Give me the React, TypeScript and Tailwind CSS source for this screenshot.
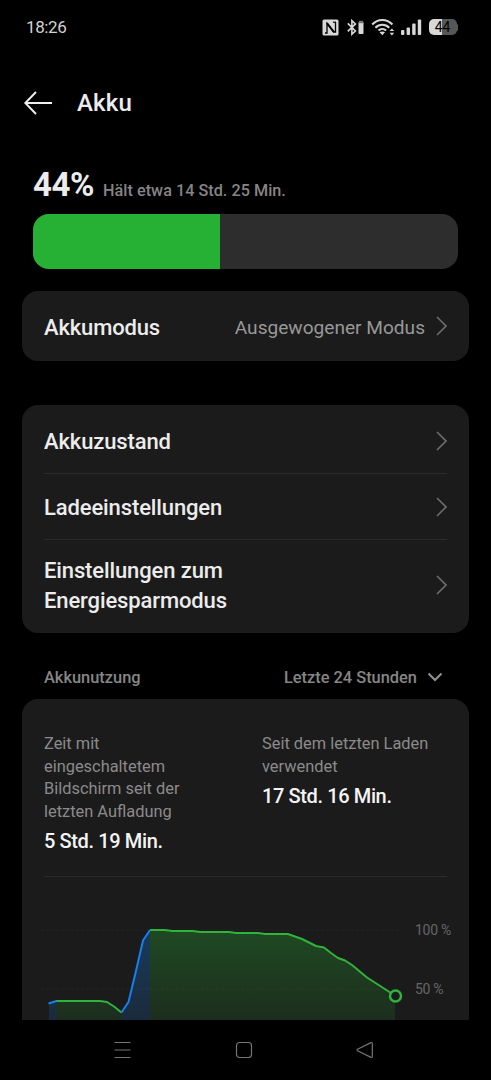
import React from "react";

const settings = [
    { title: "Akkuzustand", height: "h-[66px]" },
    { title: "Ladeeinstellungen", height: "h-[66px]" },
    { title: "Einstellungen zum Energiesparmodus", height: "h-[90px]" }
];

function Chevron() {
    return (
        <svg width="11" height="20" viewBox="0 0 11 20" fill="none" stroke="#6d6d6d" strokeWidth="1.6" className="shrink-0">
            <path d="M1 1 L10 10 L1 19" />
        </svg>
    );
}

function StatusBar() {
    return (
        <div className="flex h-[54px] items-center justify-between pl-[26px] pr-[32px]">
            <span className="text-[17px] leading-none tracking-[-0.4px] text-[#d2d2d2]">18:26</span>
            <div className="flex items-center text-[#d8d8d8]">
                {/* nfc */}
                <svg width="17" height="17" viewBox="0 0 17 17" className="mr-[8px]">
                    <rect x="0.5" y="0.5" width="16" height="16" rx="1.5" fill="#d8d8d8" />
                    <path d="M3 14 H5 V4.5 L11.5 13 H13.5 V3.2" fill="none" stroke="#000" strokeWidth="1.3" />
                    <path d="M5 4 L12 13" fill="none" stroke="#000" strokeWidth="1.8" />
                    <path d="M11 3.2 H14" fill="none" stroke="#000" strokeWidth="1.2" />
                </svg>
                {/* bluetooth with device battery */}
                <svg width="17" height="17" viewBox="0 0 17 17" className="mr-[7px]" fill="none" stroke="currentColor">
                    <path d="M0.8 4.4 L8.4 12 L4.9 15.2 V1.6 L8.4 4.9 L0.8 12.4" strokeWidth="1.6" />
                    <rect x="11.5" y="3" width="5" height="12" rx="0.8" fill="#d8d8d8" stroke="none" />
                    <rect x="12" y="1.8" width="4" height="2.4" fill="#777" stroke="none" />
                </svg>
                {/* wifi */}
                <svg width="24" height="18" viewBox="0 0 24 18" className="mr-[6px]" fill="none" stroke="currentColor" strokeWidth="2.1">
                    <path d="M1.2 6.5 C6.8 0.4 15.8 0.4 21.4 6.5" />
                    <path d="M4.4 9.7 C8.2 5.7 14.4 5.7 18.2 9.7" />
                    <path d="M7.5 12.6 C9.7 10.4 12.9 10.4 15.1 12.6" />
                    <path d="M8.6 14.2 Q11.3 12.6 14 14.2 L11.3 17.2 Z" fill="currentColor" stroke="none" />
                    <path d="M18.6 13 L20.9 10.4 L23.2 13 Z M18.6 14.8 L20.9 17.4 L23.2 14.8 Z" fill="currentColor" stroke="none" />
                </svg>
                {/* mobile signal */}
                <svg width="21" height="18" viewBox="0 0 21 18" className="mr-[7px]" fill="currentColor">
                    <rect x="0" y="12" width="3.4" height="5" rx="1" />
                    <rect x="5.6" y="9.5" width="3.4" height="7.5" rx="1" />
                    <rect x="11.2" y="5.5" width="3.4" height="11.5" rx="1" />
                    <rect x="16.8" y="1.5" width="3.4" height="15.5" rx="1" />
                </svg>
                <div className="mr-px flex items-center">
                    <div className="flex h-[16px] w-[28px] items-center justify-center rounded-[5px] bg-linear-to-r from-[#d8d8d8] from-46% to-[#575757] to-46% text-[14px] leading-none tracking-[-0.2px] text-black">
                        44
                    </div>
                    <div className="h-[7px] w-[1.5px] rounded-r bg-[#575757]" />
                </div>
            </div>
        </div>
    );
}

function BatteryChart() {
    return (
        <svg width="447" height="143" viewBox="22 877 447 143" className="block">
            <defs>
                <linearGradient id="green" gradientUnits="userSpaceOnUse" x1="0" y1="930" x2="0" y2="1040">
                    <stop offset="0" stopColor="#27b133" stopOpacity="0.31" />
                    <stop offset="1" stopColor="#27b133" stopOpacity="0.08" />
                </linearGradient>
                <linearGradient id="blue" gradientUnits="userSpaceOnUse" x1="0" y1="930" x2="0" y2="1040">
                    <stop offset="0" stopColor="#177fee" stopOpacity="0.31" />
                    <stop offset="1" stopColor="#177fee" stopOpacity="0.12" />
                </linearGradient>
            </defs>
            <path d="M41 930 H401 M41 989 H401" stroke="#242424" strokeWidth="1" strokeDasharray="3 2" />
            <path d="M49 1003.5 L56.5 1001 V1020 H49 Z M121.5 1012.5 L128.5 1002 L143 940.5 L150 930 V1020 H121.5 Z" fill="url(#blue)" />
            <path d="M56.5 1001 H100 L107 1002 L114 1006.5 L121.5 1012.5 V1020 H56.5 Z" fill="url(#green)" />
            <path d="M150 930 H165 L172 931 H193 L200 932 H229 L236 933 H258 L265 934 H288 L302 939 L316 946 L324 947.5 L331 953 L338 958 L345 960.5 L352 965 L367 977.5 L381 986.5 L395 996 V1020 H150 Z" fill="url(#green)" />
            <g fill="none" strokeWidth="2" strokeLinejoin="round">
                <path d="M56 1001 H100 L107 1002 L114 1006.5 L121.5 1012.5" stroke="#2fb33b" />
                <path d="M150 930 H165 L172 931 H193 L200 932 H229 L236 933 H258 L265 934 H288 L302 939 L316 946 L324 947.5 L331 953 L338 958 L345 960.5 L352 965 L367 977.5 L381 986.5 L391 993" stroke="#2fb33b" />
                <path d="M48.5 1003.5 L56.5 1001 M121.5 1012.5 L128.5 1002 L135.5 973 L143 940.5 L150 930" stroke="#177fee" />
            </g>
            <circle cx="395.5" cy="996" r="5.5" fill="#1b1b1b" stroke="#2fb33b" strokeWidth="2.5" />
            <g fill="#666666" className="text-[14px] tracking-[-0.3px]">
                <text x="415" y="935">100 %</text>
                <text x="415" y="994">50 %</text>
            </g>
        </svg>
    );
}

function NavBar() {
    return (
        <nav className="flex h-[60px] items-center pl-[114px] text-[#747474]">
            <svg width="17" height="18" viewBox="0 0 17 18" fill="none" stroke="currentColor" strokeWidth="1.2">
                <path d="M0.5 1.5 H16.5 M0.5 9 H16.5 M0.5 16.5 H16.5" />
            </svg>
            <svg width="18" height="18" viewBox="0 0 18 18" fill="none" stroke="currentColor" strokeWidth="1.2" className="ml-[104px]">
                <rect x="1.5" y="1.5" width="15" height="15" rx="3" />
            </svg>
            <svg width="18" height="18" viewBox="0 0 18 18" fill="none" stroke="currentColor" strokeWidth="1.2" strokeLinejoin="round" className="ml-[103px]">
                <path d="M1.5 8.3 L15 1.6 Q16.3 1.2 16.3 2.5 V15.5 Q16.3 16.8 15 16.4 L1.5 9.7 Q0.6 9 1.5 8.3 Z" />
            </svg>
        </nav>
    );
}

export default function App() {
    return (
        <main className="flex h-[1080px] w-[491px] flex-col overflow-hidden bg-black font-['Roboto',sans-serif] text-[#ececec]">
            <StatusBar />
            <header className="flex h-[97px] items-center gap-[24px] pl-[24px]">
                <svg width="29" height="24" viewBox="0 0 29 24" fill="none" stroke="#f0f0f0" strokeWidth="1.9">
                    <path d="M28 12 H1.5 M12 1 L1.3 12 L12 23" />
                </svg>
                <h1 className="text-[24px] font-medium leading-none tracking-[0.2px]">Akku</h1>
            </header>

            <section className="px-[33px] pt-[15px]">
                <div className="flex h-[48px] items-baseline gap-[9px]">
                    <span className="text-[33px] font-bold leading-[38px] tracking-[-0.4px]">44%</span>
                    <span className="text-[16.2px] font-medium tracking-[0.03px] text-[#858585]">Hält etwa 14 Std. 25 Min.</span>
                </div>
                <div className="h-[55px] overflow-hidden rounded-[16px] bg-[#2d2d2d]">
                    <div className="h-full w-[187px] bg-[#26b135]" />
                </div>
            </section>

            <section className="mx-[22px] mt-[22px] flex h-[70px] items-center rounded-[16px] bg-[#1b1b1b] px-[22px]">
                <h2 className="pt-[2px] text-[22px] font-medium tracking-[-0.15px]">Akkumodus</h2>
                <span className="ml-auto mr-[11px] pt-[4px] text-[19.1px] text-[#989898]">Ausgewogener Modus</span>
                <Chevron />
            </section>

            <section className="mx-[22px] mt-[44px] h-[228px] rounded-[16px] bg-[#1b1b1b] px-[22px] pt-[3px]">
                {settings.map((item) => (
                    <div key={item.title} className={`flex items-center justify-between border-b border-[#2b2b2b] last:border-0 ${item.height}`}>
                        <h2 className="w-[200px] pt-[2px] text-[22px] font-medium leading-[30px] tracking-[-0.12px]">{item.title}</h2>
                        <Chevron />
                    </div>
                ))}
            </section>

            <div className="flex h-[66px] items-end justify-between pb-[8px] pl-[44px] pr-[48px] text-[16.4px] font-medium text-[#868686]">
                <span>Akkunutzung</span>
                <div className="flex items-center gap-[10px]">
                    <span>Letzte 24 Stunden</span>
                    <svg width="16" height="10" viewBox="0 0 16 10" fill="none" stroke="#929292" strokeWidth="2" className="mb-[3px]">
                        <path d="M1.5 1.5 L8 8 L14.5 1.5" />
                    </svg>
                </div>
            </div>

            <section className="mx-[22px] h-[321px] rounded-t-[16px] bg-[#1b1b1b]">
                <div className="mx-[22px] flex h-[178px] border-b border-[#2b2b2b] pt-[34px]">
                    <div className="w-[218px]">
                        <p className="w-[150px] text-[16.4px] leading-[22.5px] text-[#8b8b8b]">
                            Zeit mit eingeschaltetem Bildschirm seit der letzten Aufladung
                        </p>
                        <p className="mt-[4px] text-[20px] font-medium leading-[28px] tracking-[-0.38px] text-[#f4f4f4]">5 Std. 19 Min.</p>
                    </div>
                    <div className="w-[180px]">
                        <p className="text-[16.4px] leading-[22.5px] text-[#8b8b8b]">
                            Seit dem letzten Laden verwendet
                        </p>
                        <p className="mt-[4px] text-[20px] font-medium leading-[28px] tracking-[-0.38px] text-[#f4f4f4]">17 Std. 16 Min.</p>
                    </div>
                </div>
                <BatteryChart />
            </section>
            <NavBar />
        </main>
    );
}
